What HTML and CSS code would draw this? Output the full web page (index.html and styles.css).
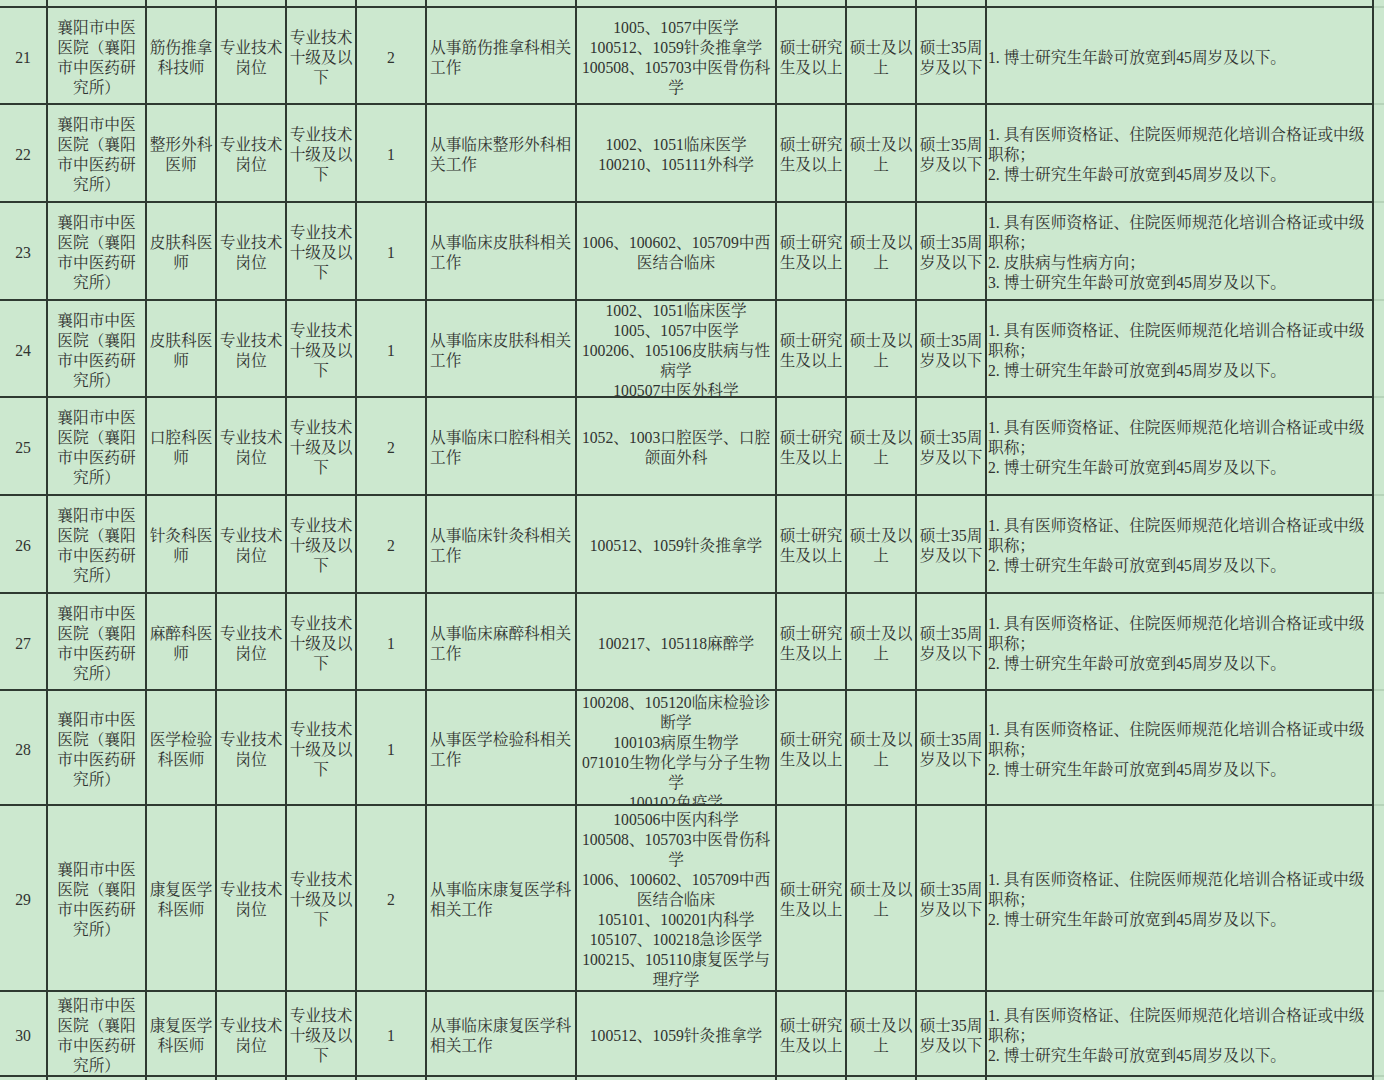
FILE: index.html
```html
<!DOCTYPE html>
<html lang="zh-CN">
<head>
<meta charset="utf-8">
<title>岗位表</title>
<link rel="stylesheet" href="styles.css">
</head>
<body>
<div class="sheet">
  <!-- top strip (end of previous row) -->
  <div class="c"></div><div class="c"></div><div class="c"></div><div class="c"></div><div class="c"></div><div class="c"></div><div class="c"></div><div class="c"></div><div class="c"></div><div class="c"></div><div class="c"></div><div class="c"></div><div class="c f"></div>

  <!-- 21 -->
  <div class="c"><div>21</div></div>
  <div class="c"><div>襄阳市中医医院（襄阳市中医药研究所）</div></div>
  <div class="c"><div>筋伤推拿科技师</div></div>
  <div class="c"><div>专业技术岗位</div></div>
  <div class="c"><div>专业技术十级及以下</div></div>
  <div class="c"><div>2</div></div>
  <div class="c l"><div>从事筋伤推拿科相关工作</div></div>
  <div class="c"><div>1005、1057中医学</div><div>100512、1059针灸推拿学</div><div>100508、105703中医骨伤科学</div></div>
  <div class="c"><div>硕士研究生及以上</div></div>
  <div class="c"><div>硕士及以上</div></div>
  <div class="c"><div>硕士35周岁及以下</div></div>
  <div class="c l r"><div>1. 博士研究生年龄可放宽到45周岁及以下。</div></div>
  <div class="c f"></div>

  <!-- 22 -->
  <div class="c"><div>22</div></div>
  <div class="c"><div>襄阳市中医医院（襄阳市中医药研究所）</div></div>
  <div class="c"><div>整形外科医师</div></div>
  <div class="c"><div>专业技术岗位</div></div>
  <div class="c"><div>专业技术十级及以下</div></div>
  <div class="c"><div>1</div></div>
  <div class="c l"><div>从事临床整形外科相关工作</div></div>
  <div class="c"><div>1002、1051临床医学</div><div>100210、105111外科学</div></div>
  <div class="c"><div>硕士研究生及以上</div></div>
  <div class="c"><div>硕士及以上</div></div>
  <div class="c"><div>硕士35周岁及以下</div></div>
  <div class="c l r"><div>1. 具有医师资格证、住院医师规范化培训合格证或中级职称；</div><div>2. 博士研究生年龄可放宽到45周岁及以下。</div></div>
  <div class="c f"></div>

  <!-- 23 -->
  <div class="c"><div>23</div></div>
  <div class="c"><div>襄阳市中医医院（襄阳市中医药研究所）</div></div>
  <div class="c"><div>皮肤科医师</div></div>
  <div class="c"><div>专业技术岗位</div></div>
  <div class="c"><div>专业技术十级及以下</div></div>
  <div class="c"><div>1</div></div>
  <div class="c l"><div>从事临床皮肤科相关工作</div></div>
  <div class="c"><div>1006、100602、105709中西医结合临床</div></div>
  <div class="c"><div>硕士研究生及以上</div></div>
  <div class="c"><div>硕士及以上</div></div>
  <div class="c"><div>硕士35周岁及以下</div></div>
  <div class="c l r"><div>1. 具有医师资格证、住院医师规范化培训合格证或中级职称；</div><div>2. 皮肤病与性病方向；</div><div>3. 博士研究生年龄可放宽到45周岁及以下。</div></div>
  <div class="c f"></div>

  <!-- 24 -->
  <div class="c"><div>24</div></div>
  <div class="c"><div>襄阳市中医医院（襄阳市中医药研究所）</div></div>
  <div class="c"><div>皮肤科医师</div></div>
  <div class="c"><div>专业技术岗位</div></div>
  <div class="c"><div>专业技术十级及以下</div></div>
  <div class="c"><div>1</div></div>
  <div class="c l"><div>从事临床皮肤科相关工作</div></div>
  <div class="c o0"><div>1002、1051临床医学</div><div>1005、1057中医学</div><div>100206、105106皮肤病与性病学</div><div>100507中医外科学</div></div>
  <div class="c"><div>硕士研究生及以上</div></div>
  <div class="c"><div>硕士及以上</div></div>
  <div class="c"><div>硕士35周岁及以下</div></div>
  <div class="c l r"><div>1. 具有医师资格证、住院医师规范化培训合格证或中级职称；</div><div>2. 博士研究生年龄可放宽到45周岁及以下。</div></div>
  <div class="c f"></div>

  <!-- 25 -->
  <div class="c"><div>25</div></div>
  <div class="c"><div>襄阳市中医医院（襄阳市中医药研究所）</div></div>
  <div class="c"><div>口腔科医师</div></div>
  <div class="c"><div>专业技术岗位</div></div>
  <div class="c"><div>专业技术十级及以下</div></div>
  <div class="c"><div>2</div></div>
  <div class="c l"><div>从事临床口腔科相关工作</div></div>
  <div class="c"><div>1052、1003口腔医学、口腔颌面外科</div></div>
  <div class="c"><div>硕士研究生及以上</div></div>
  <div class="c"><div>硕士及以上</div></div>
  <div class="c"><div>硕士35周岁及以下</div></div>
  <div class="c l r"><div>1. 具有医师资格证、住院医师规范化培训合格证或中级职称；</div><div>2. 博士研究生年龄可放宽到45周岁及以下。</div></div>
  <div class="c f"></div>

  <!-- 26 -->
  <div class="c"><div>26</div></div>
  <div class="c"><div>襄阳市中医医院（襄阳市中医药研究所）</div></div>
  <div class="c"><div>针灸科医师</div></div>
  <div class="c"><div>专业技术岗位</div></div>
  <div class="c"><div>专业技术十级及以下</div></div>
  <div class="c"><div>2</div></div>
  <div class="c l"><div>从事临床针灸科相关工作</div></div>
  <div class="c"><div>100512、1059针灸推拿学</div></div>
  <div class="c"><div>硕士研究生及以上</div></div>
  <div class="c"><div>硕士及以上</div></div>
  <div class="c"><div>硕士35周岁及以下</div></div>
  <div class="c l r"><div>1. 具有医师资格证、住院医师规范化培训合格证或中级职称；</div><div>2. 博士研究生年龄可放宽到45周岁及以下。</div></div>
  <div class="c f"></div>

  <!-- 27 -->
  <div class="c"><div>27</div></div>
  <div class="c"><div>襄阳市中医医院（襄阳市中医药研究所）</div></div>
  <div class="c"><div>麻醉科医师</div></div>
  <div class="c"><div>专业技术岗位</div></div>
  <div class="c"><div>专业技术十级及以下</div></div>
  <div class="c"><div>1</div></div>
  <div class="c l"><div>从事临床麻醉科相关工作</div></div>
  <div class="c"><div>100217、105118麻醉学</div></div>
  <div class="c"><div>硕士研究生及以上</div></div>
  <div class="c"><div>硕士及以上</div></div>
  <div class="c"><div>硕士35周岁及以下</div></div>
  <div class="c l r"><div>1. 具有医师资格证、住院医师规范化培训合格证或中级职称；</div><div>2. 博士研究生年龄可放宽到45周岁及以下。</div></div>
  <div class="c f"></div>

  <!-- 28 -->
  <div class="c"><div>28</div></div>
  <div class="c"><div>襄阳市中医医院（襄阳市中医药研究所）</div></div>
  <div class="c"><div>医学检验科医师</div></div>
  <div class="c"><div>专业技术岗位</div></div>
  <div class="c"><div>专业技术十级及以下</div></div>
  <div class="c"><div>1</div></div>
  <div class="c l"><div>从事医学检验科相关工作</div></div>
  <div class="c o2"><div>100208、105120临床检验诊断学</div><div>100103病原生物学</div><div>071010生物化学与分子生物学</div><div>100102免疫学</div></div>
  <div class="c"><div>硕士研究生及以上</div></div>
  <div class="c"><div>硕士及以上</div></div>
  <div class="c"><div>硕士35周岁及以下</div></div>
  <div class="c l r"><div>1. 具有医师资格证、住院医师规范化培训合格证或中级职称；</div><div>2. 博士研究生年龄可放宽到45周岁及以下。</div></div>
  <div class="c f"></div>

  <!-- 29 -->
  <div class="c"><div>29</div></div>
  <div class="c"><div>襄阳市中医医院（襄阳市中医药研究所）</div></div>
  <div class="c"><div>康复医学科医师</div></div>
  <div class="c"><div>专业技术岗位</div></div>
  <div class="c"><div>专业技术十级及以下</div></div>
  <div class="c"><div>2</div></div>
  <div class="c l"><div>从事临床康复医学科相关工作</div></div>
  <div class="c"><div>100506中医内科学</div><div>100508、105703中医骨伤科学</div><div>1006、100602、105709中西医结合临床</div><div>105101、100201内科学</div><div>105107、100218急诊医学</div><div>100215、105110康复医学与理疗学</div></div>
  <div class="c"><div>硕士研究生及以上</div></div>
  <div class="c"><div>硕士及以上</div></div>
  <div class="c"><div>硕士35周岁及以下</div></div>
  <div class="c l r"><div>1. 具有医师资格证、住院医师规范化培训合格证或中级职称；</div><div>2. 博士研究生年龄可放宽到45周岁及以下。</div></div>
  <div class="c f"></div>

  <!-- 30 -->
  <div class="c"><div>30</div></div>
  <div class="c"><div>襄阳市中医医院（襄阳市中医药研究所）</div></div>
  <div class="c"><div>康复医学科医师</div></div>
  <div class="c"><div>专业技术岗位</div></div>
  <div class="c"><div>专业技术十级及以下</div></div>
  <div class="c"><div>1</div></div>
  <div class="c l"><div>从事临床康复医学科相关工作</div></div>
  <div class="c"><div>100512、1059针灸推拿学</div></div>
  <div class="c"><div>硕士研究生及以上</div></div>
  <div class="c"><div>硕士及以上</div></div>
  <div class="c"><div>硕士35周岁及以下</div></div>
  <div class="c l r"><div>1. 具有医师资格证、住院医师规范化培训合格证或中级职称；</div><div>2. 博士研究生年龄可放宽到45周岁及以下。</div></div>
  <div class="c f"></div>

  <!-- bottom strip (start of next row) -->
  <div class="c b"></div><div class="c b"></div><div class="c b"></div><div class="c b"></div><div class="c b"></div><div class="c b"></div><div class="c b"></div><div class="c b"></div><div class="c b"></div><div class="c b"></div><div class="c b"></div><div class="c b"></div><div class="c b f"></div>
</div>
</body>
</html>
```

FILE: styles.css
```css
html, body {
  margin: 0;
  padding: 0;
  background: #cce8cf;
}

.sheet {
  display: grid;
  grid-template-columns: 48px 99px 70px 70px 70px 70px 150px 200px 70px 70px 70px 387px 10px;
  grid-template-rows: 8px 97px 98px 98px 97px 98px 98px 97px 115px 186px 85px 3px;
  width: 1384px;
  height: 1080px;
  overflow: hidden;
  background: #cce8cf;
  font-family: "Liberation Serif", "Noto Serif CJK SC", "Noto Sans CJK SC", serif;
  font-size: 15.7px;
  line-height: 20px;
  color: #303330;
}

.c {
  box-sizing: border-box;
  border-right: 2px solid #2e3a31;
  border-bottom: 2px solid #2e3a31;
  padding: 4px 2px 0;
  display: flex;
  flex-direction: column;
  justify-content: safe center;
  text-align: center;
  overflow: hidden;
  min-width: 0;
  min-height: 0;
}

.c.l {
  text-align: left;
  padding-left: 3px;
}

.c.r {
  padding-left: 1px;
}

.c.o0 {
  padding-top: 0;
}

.c.o2 {
  padding-top: 2px;
}

.c.f {
  border-right: none;
  border-bottom: 2px solid #b6d3b9;
  padding: 0;
}

.c.b {
  border-bottom: none;
  padding: 0;
}
```
